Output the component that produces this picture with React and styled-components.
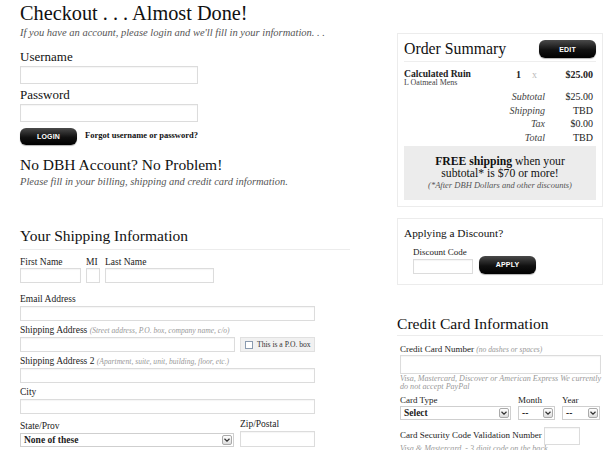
import styled, { createGlobalStyle } from "styled-components";

const serif = `"Liberation Serif", "Times New Roman", serif`;
const sans = `"Liberation Sans", Arial, sans-serif`;

const GlobalStyle = createGlobalStyle`
  html, body { margin: 0; padding: 0; background: #fff; }
  body { font-family: ${serif}; color: #222; }
  * { box-sizing: border-box; }
`;

const Page = styled.div`
  width: 615px;
  height: 450px;
  overflow: hidden;
  display: flex;
  align-items: flex-start;
  gap: 47px;
  padding-left: 20px;
`;

const LeftCol = styled.div`
  width: 330px;
  display: flex;
  flex-direction: column;
  > * { flex-shrink: 0; }
`;

const RightCol = styled.div`
  width: 206px;
  padding-top: 33px;
  display: flex;
  flex-direction: column;
  > * { flex-shrink: 0; }
`;

const Title = styled.h1`
  margin: 0;
  font-size: 20.3px;
  line-height: 26px;
  font-weight: normal;
  color: #111;
`;

const Lead = styled.p`
  margin: 0;
  font-size: 10.5px;
  line-height: 14px;
  font-style: italic;
  color: #555;
  white-space: nowrap;
`;

const BigLabel = styled.div`
  margin-top: ${p => p.$mt}px;
  font-size: 13px;
  line-height: 16px;
  color: #111;
`;

const Input = styled.div`
  width: ${p => p.$w}px;
  height: ${p => p.$h || 15}px;
  margin-top: ${p => p.$mt || 0}px;
  border: 1px solid #dcdcdc;
  box-shadow: inset 0 1px 1px rgba(0, 0, 0, 0.04);
  background: #fff;
  flex: none;
`;

const LoginRow = styled.div`
  margin-top: 6px;
  display: flex;
  align-items: center;
  gap: 8px;
`;

const PillButton = styled.div`
  width: ${p => p.$w}px;
  height: ${p => p.$h}px;
  border-radius: 6px;
  background: linear-gradient(#4a4a4a, #111 55%, #000);
  color: #fff;
  font-family: ${sans};
  font-weight: bold;
  font-size: 7px;
  letter-spacing: 0.2px;
  display: flex;
  align-items: center;
  justify-content: center;
  box-shadow: 0 1px 1px rgba(0, 0, 0, 0.3);
  flex: none;
`;

const SmallBoldLink = styled.span`
  font-size: 8.5px;
  font-weight: bold;
  color: #111;
  margin-top: -4px;
`;

const SectionHead = styled.h2`
  margin: ${p => p.$mt || 0}px 0 0;
  font-size: ${p => p.$size || 15}px;
  line-height: 20px;
  font-weight: normal;
  color: #111;
  padding-bottom: ${p => p.$pb || 0}px;
  border-bottom: ${p => (p.$rule ? "1px solid #ececec" : "none")};
`;

const FieldRow = styled.div`
  display: flex;
  gap: ${p => p.$gap || 5}px;
  margin-top: ${p => p.$mt || 0}px;
  align-items: flex-end;
`;

const Field = styled.div`
  display: flex;
  flex-direction: column;
  width: ${p => (p.$w ? `${p.$w}px` : "auto")};
`;

const FieldLabel = styled.div`
  font-size: ${p => p.$size || 9.5}px;
  line-height: 11px;
  color: #222;
  white-space: nowrap;
  margin-bottom: ${p => p.$mb || 0}px;
`;

const Hint = styled.span`
  font-style: italic;
  color: #999;
  font-size: 7.6px;
`;

const POBox = styled.div`
  width: 75px;
  height: 15px;
  background: #f1f1f1;
  border: 1px solid #e0e0e0;
  display: flex;
  align-items: center;
  gap: 4px;
  padding-left: 4px;
  font-size: 7.6px;
  color: #333;
  white-space: nowrap;
  flex: none;
`;

const Check = styled.span`
  width: 8px;
  height: 8px;
  border: 1px solid #8a9bb0;
  background: #fff;
  flex: none;
`;

const Select = styled.div`
  width: ${p => p.$w}px;
  height: 14px;
  border: 1px solid #cfcfcf;
  background: #fff;
  display: flex;
  align-items: center;
  justify-content: space-between;
  padding: 0 1px 0 3px;
  font-size: 9.5px;
  font-weight: bold;
  color: #222;
`;

const Arrow = styled.span`
  width: 10px;
  height: 10px;
  border: 1px solid #aaa;
  border-radius: 2px;
  background: linear-gradient(#fff, #ddd);
  display: flex;
  align-items: center;
  justify-content: center;
`;

const Chevron = () => (
  <svg width="6" height="4" viewBox="0 0 6 4">
    <path d="M0.5 0.8 L3 3.2 L5.5 0.8" fill="none" stroke="#333" strokeWidth="1.2" />
  </svg>
);

const Panel = styled.div`
  border: 1px solid #ececec;
  padding: ${p => p.$pad};
  margin-top: ${p => p.$mt || 0}px;
  height: ${p => (p.$h ? `${p.$h}px` : "auto")};
`;

const PanelHead = styled.div`
  display: flex;
  justify-content: space-between;
  align-items: center;
  padding: 0 0 2px 0;
  border-bottom: 1px solid #eee;
`;

const PanelTitle = styled.div`
  font-size: ${p => p.$size}px;
  line-height: 20px;
  color: #111;
`;

const ItemRow = styled.div`
  display: grid;
  grid-template-columns: 1fr 16px 20px 44px;
  align-items: start;
  margin-top: 7px;
`;

const ItemName = styled.div`
  font-size: 9.6px;
  font-weight: bold;
  line-height: 9px;
  color: #222;
`;

const ItemSub = styled.div`
  font-size: 8px;
  line-height: 10px;
  color: #444;
`;

const Num = styled.div`
  font-size: 10px;
  line-height: 11px;
  color: ${p => (p.$muted ? "#bbb" : "#222")};
  font-weight: ${p => (p.$bold ? "bold" : "normal")};
  text-align: ${p => p.$align || "left"};
  padding-right: ${p => p.$pr || 0}px;
`;

const Totals = styled.div`
  display: grid;
  grid-template-columns: 1fr 48px;
  row-gap: 2.5px;
  margin-top: 3px;
  padding-right: 3px;
`;

const TotalLabel = styled.div`
  font-size: 10px;
  line-height: 11px;
  font-style: italic;
  color: #444;
  text-align: right;
`;

const TotalValue = styled.div`
  font-size: 10px;
  line-height: 11px;
  color: #222;
  text-align: right;
`;

const Promo = styled.div`
  margin-top: 3px;
  background: #ececec;
  padding: 10px 4px 10px;
  text-align: center;
  color: #111;
`;

const PromoLine = styled.div`
  font-size: 11.7px;
  line-height: 12px;
  b { font-weight: bold; }
`;

const PromoNote = styled.div`
  font-size: 8.5px;
  line-height: 10px;
  font-style: italic;
  color: #555;
`;

const DiscountRow = styled.div`
  display: flex;
  align-items: flex-end;
  gap: 6px;
  margin: 4px 0 0 9px;
`;

const HelpText = styled.div`
  font-size: 8.1px;
  line-height: 8px;
  font-style: italic;
  color: #999;
  white-space: nowrap;
  margin-top: ${p => p.$mt || 0}px;
`;

const CvvRow = styled.div`
  display: flex;
  align-items: center;
  gap: 2px;
  margin-top: 7px;
`;

const CardBlock = styled.div`
  padding-left: 3px;
`;

export default function App() {
  return (
    <>
      <GlobalStyle />
      <Page>
        <LeftCol>
          <Title>Checkout . . . Almost Done!</Title>
          <Lead>If you have an account, please login and we'll fill in your information. . .</Lead>
          <BigLabel $mt={9}>Username</BigLabel>
          <Input $w={178} $h={18} $mt={1} />
          <BigLabel $mt={3}>Password</BigLabel>
          <Input $w={178} $h={18} $mt={1} />
          <LoginRow>
            <PillButton $w={57} $h={17}>LOGIN</PillButton>
            <SmallBoldLink>Forgot username or password?</SmallBoldLink>
          </LoginRow>

          <SectionHead $mt={10} $size={15.5}>No DBH Account? No Problem!</SectionHead>
          <Lead>Please fill in your billing, shipping and credit card information.</Lead>

          <SectionHead $mt={37} $size={15.5} $pb={3} $rule>Your Shipping Information</SectionHead>

          <FieldRow $mt={7}>
            <Field>
              <FieldLabel>First Name</FieldLabel>
              <Input $w={61} />
            </Field>
            <Field>
              <FieldLabel>MI</FieldLabel>
              <Input $w={14} />
            </Field>
            <Field>
              <FieldLabel>Last Name</FieldLabel>
              <Input $w={109} />
            </Field>
          </FieldRow>

          <FieldRow $mt={11}>
            <Field>
              <FieldLabel $mb={1}>Email Address</FieldLabel>
              <Input $w={295} />
            </Field>
          </FieldRow>

          <FieldRow $mt={4}>
            <Field $w={215}>
              <FieldLabel $mb={1}>
                Shipping Address <Hint>(Street address, P.O. box, company name, c/o)</Hint>
              </FieldLabel>
              <Input $w={215} />
            </Field>
            <POBox>
              <Check />
              This is a P.O. box
            </POBox>
          </FieldRow>

          <FieldRow $mt={4}>
            <Field>
              <FieldLabel $mb={1}>
                Shipping Address 2 <Hint>(Apartment, suite, unit, building, floor, etc.)</Hint>
              </FieldLabel>
              <Input $w={295} />
            </Field>
          </FieldRow>

          <FieldRow $mt={4}>
            <Field>
              <FieldLabel $mb={1}>City</FieldLabel>
              <Input $w={295} />
            </Field>
          </FieldRow>

          <FieldRow $mt={5} $gap={6}>
            <Field>
              <FieldLabel $mb={1}>State/Prov</FieldLabel>
              <Select $w={214}>
                None of these
                <Arrow><Chevron /></Arrow>
              </Select>
            </Field>
            <Field>
              <FieldLabel $mb={1}>Zip/Postal</FieldLabel>
              <Input $w={75} $h={16} />
            </Field>
          </FieldRow>
        </LeftCol>

        <RightCol>
          <Panel $pad="5px 6px 6px 6px">
            <PanelHead>
              <PanelTitle $size={15.8}>Order Summary</PanelTitle>
              <PillButton $w={57} $h={18}>EDIT</PillButton>
            </PanelHead>
            <ItemRow>
              <div>
                <ItemName>Calculated Ruin</ItemName>
                <ItemSub>L Oatmeal Mens</ItemSub>
              </div>
              <Num $bold>1</Num>
              <Num $muted>x</Num>
              <Num $bold $align="right" $pr={3}>$25.00</Num>
            </ItemRow>
            <Totals>
              <TotalLabel>Subtotal</TotalLabel>
              <TotalValue>$25.00</TotalValue>
              <TotalLabel>Shipping</TotalLabel>
              <TotalValue>TBD</TotalValue>
              <TotalLabel>Tax</TotalLabel>
              <TotalValue>$0.00</TotalValue>
              <TotalLabel>Total</TotalLabel>
              <TotalValue>TBD</TotalValue>
            </Totals>
            <Promo>
              <PromoLine><b>FREE shipping</b> when your</PromoLine>
              <PromoLine>subtotal* is $70 or more!</PromoLine>
              <PromoNote>(*After DBH Dollars and other discounts)</PromoNote>
            </Promo>
          </Panel>

          <Panel $mt={11} $pad="4px 6px 0 6px" $h={67}>
            <PanelTitle $size={11.3}>Applying a Discount?</PanelTitle>
            <DiscountRow>
              <Field>
                <FieldLabel $size={9} $mb={1}>Discount Code</FieldLabel>
                <Input $w={60} />
              </Field>
              <PillButton $w={57} $h={18}>APPLY</PillButton>
            </DiscountRow>
          </Panel>

          <SectionHead $mt={29} $size={15.6} $pb={1} $rule>Credit Card Information</SectionHead>
          <CardBlock>
            <FieldRow $mt={8}>
              <Field>
                <FieldLabel $size={9}>
                  Credit Card Number <Hint>(no dashes or spaces)</Hint>
                </FieldLabel>
                <Input $w={201} $h={19} />
              </Field>
            </FieldRow>
            <HelpText $mt={1}>
              Visa, Mastercard, Discover or American Express We currently
              <br />
              do not accept PayPal
            </HelpText>
            <FieldRow $mt={4} $gap={7}>
              <Field>
                <FieldLabel $size={9}>Card Type</FieldLabel>
                <Select $w={111}>Select<Arrow><Chevron /></Arrow></Select>
              </Field>
              <Field>
                <FieldLabel $size={9}>Month</FieldLabel>
                <Select $w={37}>--<Arrow><Chevron /></Arrow></Select>
              </Field>
              <Field>
                <FieldLabel $size={9}>Year</FieldLabel>
                <Select $w={38}>--<Arrow><Chevron /></Arrow></Select>
              </Field>
            </FieldRow>
            <CvvRow>
              <FieldLabel $size={9}>Card Security Code Validation Number</FieldLabel>
              <Input $w={36} $h={18} />
            </CvvRow>
            <HelpText>Visa &amp; Mastercard, - 3 digit code on the back</HelpText>
          </CardBlock>
        </RightCol>
      </Page>
    </>
  );
}
